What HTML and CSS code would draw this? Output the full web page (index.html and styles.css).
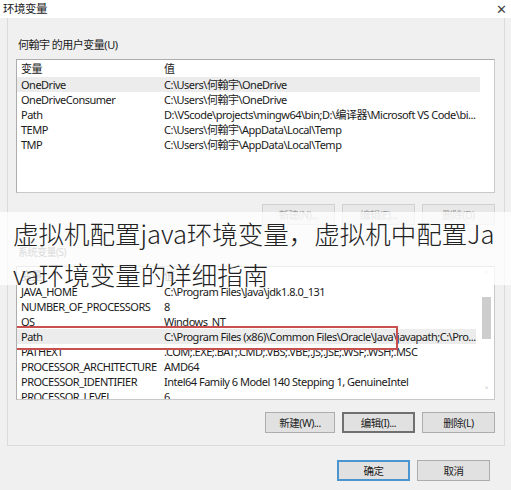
FILE: index.html
```html
<!DOCTYPE html>
<html lang="zh">
<head>
<meta charset="utf-8">
<link rel="stylesheet" href="styles.css">
</head>
<body>
<div class="window">
  <div class="titlebar">
    <span class="title">环境变量</span>
    <span class="close">✕</span>
  </div>
  <div class="frame">
    <div class="group-label user-label">何翰宇 的用户变量(U)</div>
    <div class="listbox">
      <div class="row head"><span class="c1">变量</span><span class="c2">值</span></div>
      <div class="row sel"><span class="c1">OneDrive</span><span class="c2">C:\Users\何翰宇\OneDrive</span></div>
      <div class="row"><span class="c1">OneDriveConsumer</span><span class="c2">C:\Users\何翰宇\OneDrive</span></div>
      <div class="row"><span class="c1">Path</span><span class="c2">D:\VScode\projects\mingw64\bin;D:\编译器\Microsoft VS Code\bi...</span></div>
      <div class="row"><span class="c1">TEMP</span><span class="c2">C:\Users\何翰宇\AppData\Local\Temp</span></div>
      <div class="row"><span class="c1">TMP</span><span class="c2">C:\Users\何翰宇\AppData\Local\Temp</span></div>
    </div>
    <div class="btnrow top-btns">
      <button class="btn">新建(N)...</button>
      <button class="btn">编辑(E)...</button>
      <button class="btn">删除(D)</button>
    </div>
    <div class="group-label sys-label">系统变量(S)</div>
    <div class="listbox sys">
      <div class="rows">
        <div class="row head"><span class="c1">变量</span><span class="c2">值</span></div>
        <div class="row"><span class="c1">JAVA_HOME</span><span class="c2">C:\Program Files\Java\jdk1.8.0_131</span></div>
        <div class="row"><span class="c1">NUMBER_OF_PROCESSORS</span><span class="c2">8</span></div>
        <div class="row"><span class="c1">OS</span><span class="c2">Windows_NT</span></div>
        <div class="row sel marked"><span class="c1">Path</span><span class="c2">C:\Program Files (x86)\Common Files\Oracle\Java\javapath;C:\Pro...</span></div>
        <div class="row"><span class="c1">PATHEXT</span><span class="c2">.COM;.EXE;.BAT;.CMD;.VBS;.VBE;.JS;.JSE;.WSF;.WSH;.MSC</span></div>
        <div class="row"><span class="c1">PROCESSOR_ARCHITECTURE</span><span class="c2">AMD64</span></div>
        <div class="row"><span class="c1">PROCESSOR_IDENTIFIER</span><span class="c2">Intel64 Family 6 Model 140 Stepping 1, GenuineIntel</span></div>
        <div class="row"><span class="c1">PROCESSOR_LEVEL</span><span class="c2">6</span></div>
      </div>
      <div class="scrollbar">
        <span class="arrow">&#x2C4;</span>
        <div class="track"><div class="thumb"></div></div>
        <span class="arrow">&#x2C5;</span>
      </div>
    </div>
    <div class="btnrow low-btns">
      <button class="btn">新建(W)...</button>
      <button class="btn focus">编辑(I)...</button>
      <button class="btn">删除(L)</button>
    </div>
  </div>
  <div class="btnrow ok-row">
    <button class="btn primary">确定</button>
    <button class="btn">取消</button>
  </div>
  <div class="overlay"></div>
  <div class="overlay-text">
    <div class="ot-line">虚拟机配置java环境变量，虚拟机中配置Ja</div>
    <div class="ot-line">va环境变量的详细指南</div>
  </div>
</div>
</body>
</html>
```
FILE: styles.css
```css
* { box-sizing: border-box; }
html, body { margin: 0; padding: 0; }
body {
  width: 511px;
  height: 490px;
  background: #f0f0f0;
  font-family: "Noto Sans", "Noto Sans CJK SC", sans-serif;
  font-size: 11px;
  letter-spacing: -0.5px;
  color: #1a1a1a;
  overflow: hidden;
}
.window {
  position: relative;
  width: 511px;
  height: 490px;
}
.titlebar {
  height: 18px;
  background: #ffffff;
  display: flex;
  align-items: center;
  justify-content: space-between;
  padding: 0 4px 0 3px;
  font-size: 11.5px;
}
.title { line-height: 14px; }
.close { font-size: 13px; color: #444; line-height: 14px; margin-right: 1px; }
.frame {
  margin: 0 6px 0 7px;
  height: 428px;
  border: 1px solid #dadada;
  border-top: none;
  padding: 0 9px 0 8px;
  display: flex;
  flex-direction: column;
}
.group-label {
  line-height: 12px;
  height: 12px;
  font-size: 11px;
  padding-left: 2px;
}
.user-label { margin-top: 21px; }
.sys-label {
  margin-top: 21px;
  font-size: 10px;
  color: #555;
}
.listbox {
  margin-top: 8px;
  height: 134px;
  background: #ffffff;
  border: 1px solid #828790;
  border-color: #adadad #c8c8c8 #c8c8c8 #adadad;
  overflow: hidden;
  position: relative;
}
.listbox.sys { display: flex; }
.rows { flex: 1; min-width: 0; }
.row {
  display: flex;
  height: 15px;
  line-height: 15px;
  margin-right: 14px;
  white-space: nowrap;
  overflow: hidden;
}
.sys .row { margin-right: 3px; }
.row.head { height: 17px; line-height: 17px; padding-top: 0; }
.row.sel { background: #ececec; }
.c1 { width: 147px; padding-left: 4px; flex: none; }
.c2 { flex: 1; overflow: hidden; }
.marked { position: relative; overflow: visible; }
.marked::after {
  content: "";
  position: absolute;
  left: -4px;
  top: -3px;
  width: 381px;
  height: 20px;
  border: 2px solid #c9504f;
  pointer-events: none;
}
.scrollbar {
  width: 15px;
  flex: none;
  display: flex;
  flex-direction: column;
  align-items: center;
  background: #ffffff;
}
.arrow {
  height: 16px;
  line-height: 16px;
  font-size: 10px;
  color: #a0a0a0;
}
.track { flex: 1; width: 100%; padding-top: 14px; display: flex; justify-content: center; }
.thumb { width: 9px; height: 42px; background: #cdcdcd; }
.btnrow {
  display: flex;
  justify-content: flex-end;
  gap: 7px;
}
.top-btns { margin-top: 11px; }
.low-btns { margin-top: 12px; }
.btn {
  width: 73px;
  height: 21px;
  padding: 0;
  font-family: "Noto Sans", "Noto Sans CJK SC", sans-serif;
  font-size: 10.5px;
  letter-spacing: -0.5px;
  color: #222;
  background: #e1e1e1;
  border: 1px solid #adadad;
}
.top-btns .btn { color: #9a9a9a; background: #e8e8e8; border-color: #d0d0d0; }
.low-btns .btn:first-child { width: 70px; }
.btn.focus { border: 2px solid #707070; }
.ok-row { margin-top: 14px; padding-right: 21px; }
.btn.primary { border: 2px solid #4a95d0; }
.overlay {
  position: absolute;
  left: 0;
  top: 212px;
  width: 511px;
  height: 73px;
  background: rgba(255, 255, 255, 0.78);
}
.overlay-text {
  position: absolute;
  left: 13px;
  top: 212px;
  font-family: "Noto Sans CJK SC", sans-serif;
  font-weight: 300;
  font-size: 25.5px;
  letter-spacing: 0;
  line-height: 41px;
  color: #222;
}
.ot-line { white-space: nowrap; }
```
